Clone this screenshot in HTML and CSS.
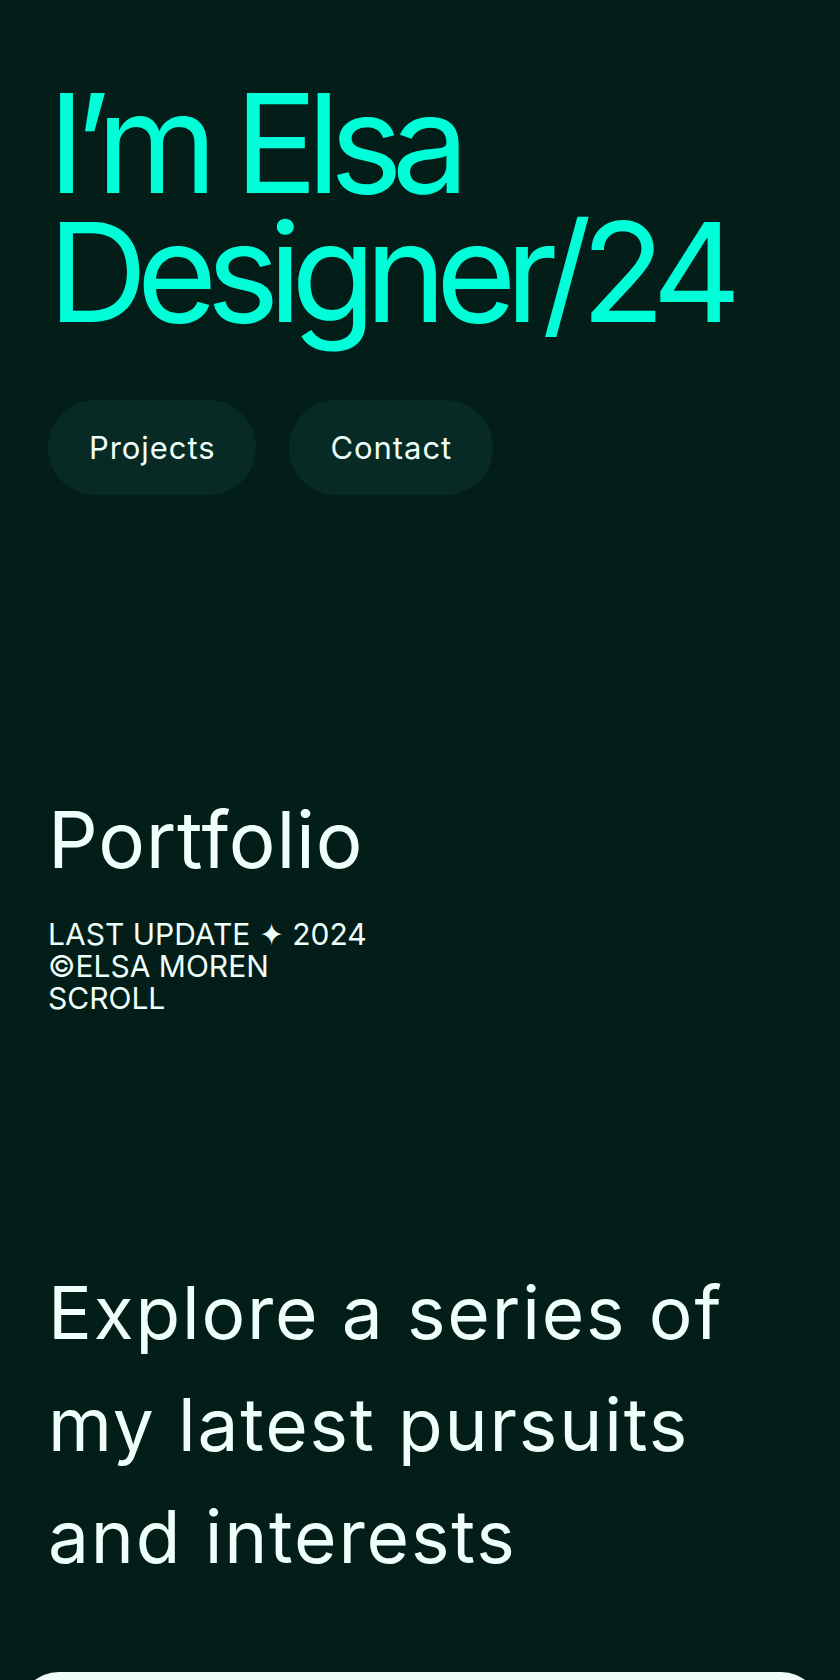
FILE: index.html
```html
<!DOCTYPE html>
<html>
    <head>
        <title>Elsa Moren — Designer</title>
        <link rel="stylesheet" href="styles.css">
    </head>
<body>
    <main class="page">
        <header class="hero">
            <h1 class="hero-title">I’m Elsa<br>Designer/24</h1>
            <nav class="hero-nav">
                <a class="pill" href="#projects">Projects</a>
                <a class="pill" href="#contact">Contact</a>
            </nav>
        </header>

        <section class="intro">
            <h2 class="intro-title">Portfolio</h2>
            <ul class="meta">
                <li>Last update ✦ 2024</li>
                <li>©Elsa Moren</li>
                <li>Scroll</li>
            </ul>
        </section>

        <section class="lead" id="projects">
            <p class="lead-text">Explore a series of my latest pursuits and interests</p>
        </section>
    </main>

    <div class="sheet"></div>
</body>
</html>
```

FILE: styles.css
```css
body {
    margin: 0;
    background-color: #031d19;
    color: #effffa;
    font-family: Inter, "Noto Sans", sans-serif;
    overflow: hidden;
}

.page {
    padding: 0 48px;
}

.hero-title {
    margin: 78px 0 0;
    font-size: 138px;
    font-weight: 400;
    line-height: 129px;
    letter-spacing: -0.078em;
    color: #00ffd8;
}

.hero-nav {
    display: flex;
    gap: 33px;
    margin-top: 64px;
}

.pill {
    display: flex;
    align-items: center;
    height: 95px;
    padding: 0 41px;
    border-radius: 48px;
    background-color: #072a25;
    color: #effffa;
    font-size: 31px;
    letter-spacing: 0.03em;
    text-decoration: none;
}

.intro {
    margin-top: 306px;
}

.intro-title {
    margin: 0;
    font-size: 78px;
    font-weight: 400;
    line-height: 78px;
    letter-spacing: 0.01em;
}

.meta {
    list-style: none;
    margin: 39px 0 0;
    padding: 0;
    font-size: 30px;
    line-height: 32px;
    text-transform: uppercase;
}

.lead {
    margin-top: 243px;
}

.lead-text {
    margin: 0;
    max-width: 740px;
    font-size: 73px;
    line-height: 112px;
    letter-spacing: 0.025em;
}

.sheet {
    height: 200px;
    margin: 79px 19px 0;
    border-radius: 40px 40px 0 0;
    background-color: #f0fffb;
}
```
